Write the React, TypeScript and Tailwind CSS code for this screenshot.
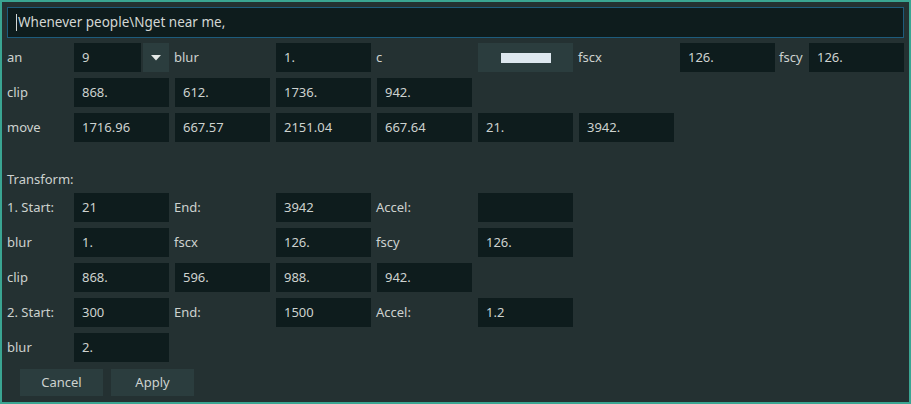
import React from 'react';

const font = { fontFamily: '"Noto Sans", "Open Sans", sans-serif' };

const Field: React.FC<{ value?: string; className?: string }> = ({ value = '', className = '' }) => (
  <div className={`h-[29px] bg-[#0e1c1d] text-[#cdd2cf] flex items-center pl-2 whitespace-nowrap ${className}`}>
    {value}
  </div>
);

const Label: React.FC<{ text: string; className?: string }> = ({ text, className = '' }) => (
  <div className={`h-[29px] flex items-center text-[#cdd2cf] whitespace-nowrap ${className}`}>{text}</div>
);

const Empty = () => <div />;

const gridCols =
  'grid grid-cols-[61px_95px_95px_95px_95px_95px_95px_95px_22px_95px] gap-x-[6px] gap-y-[6px]';

export default function App() {
  return (
    <div
      style={font}
      className="w-[911px] h-[404px] border-2 border-[#3aa592] bg-[#243132] px-[5px] pt-[5px] text-[13px] overflow-hidden"
    >
      {/* text line */}
      <div className="h-[31px] border border-[#1d5b7c] bg-[#0e1c1d] flex items-center pl-[8px] text-[#d3d7d4] text-[13.5px]">
        <span className="w-px h-[17px] bg-[#d3d7d4] mr-px" />
        Whenever people\Nget near me,
      </div>

      <div className={`${gridCols} mt-[5px]`}>
        <Label text="an" />
        <div className="flex gap-[2px]">
          <Field value="9" className="w-[67px]" />
          <div className="w-[26px] h-[29px] bg-[#2b3d3e] flex items-center justify-center">
            <svg width="10" height="6" viewBox="0 0 10 6">
              <path d="M0 0 L10 0 L5 5.5 Z" fill="#e4e8e6" />
            </svg>
          </div>
        </div>
        <Label text="blur" className="-ml-px" />
        <Field value="1." />
        <Label text="c" className="-ml-px" />
        <div className="h-[29px] bg-[#2b3d3e] flex items-center justify-center">
          <div className="w-[50px] h-[10px] bg-[#dde7ee]" />
        </div>
        <Label text="fscx" className="-ml-px" />
        <Field value="126." />
        <Label text="fscy" className="-ml-[2px]" />
        <Field value="126." />

        <Label text="clip" />
        <Field value="868." />
        <Field value="612." />
        <Field value="1736." />
        <Field value="942." />
        <Empty />
        <Empty />
        <Empty />
        <Empty />
        <Empty />

        <Label text="move" />
        <Field value="1716.96" />
        <Field value="667.57" />
        <Field value="2151.04" />
        <Field value="667.64" />
        <Field value="21." />
        <Field value="3942." />
      </div>

      <div className="mt-[29px] h-[18px] flex items-center text-[#cdd2cf]">Transform:</div>

      <div className={`${gridCols} mt-[4px]`}>
        <Label text="1. Start:" />
        <Field value="21" />
        <Label text="End:" className="-ml-px" />
        <Field value="3942" />
        <Label text="Accel:" className="-ml-px" />
        <Field value="" />
        <Empty />
        <Empty />
        <Empty />
        <Empty />

        <Label text="blur" />
        <Field value="1." />
        <Label text="fscx" className="-ml-px" />
        <Field value="126." />
        <Label text="fscy" className="-ml-px" />
        <Field value="126." />
        <Empty />
        <Empty />
        <Empty />
        <Empty />

        <Label text="clip" />
        <Field value="868." />
        <Field value="596." />
        <Field value="988." />
        <Field value="942." />
        <Empty />
        <Empty />
        <Empty />
        <Empty />
        <Empty />

        <Label text="2. Start:" />
        <Field value="300" />
        <Label text="End:" className="-ml-px" />
        <Field value="1500" />
        <Label text="Accel:" className="-ml-px" />
        <Field value="1.2" />
        <Empty />
        <Empty />
        <Empty />
        <Empty />

        <Label text="blur" />
        <Field value="2." />
      </div>

      <div className="flex gap-[8px] ml-[13px] mt-[7px]">
        <button className="w-[83px] h-[27px] bg-[#2b3d3e] text-[#cdd2cf]">Cancel</button>
        <button className="w-[83px] h-[27px] bg-[#2b3d3e] text-[#cdd2cf]">Apply</button>
      </div>
    </div>
  );
}
